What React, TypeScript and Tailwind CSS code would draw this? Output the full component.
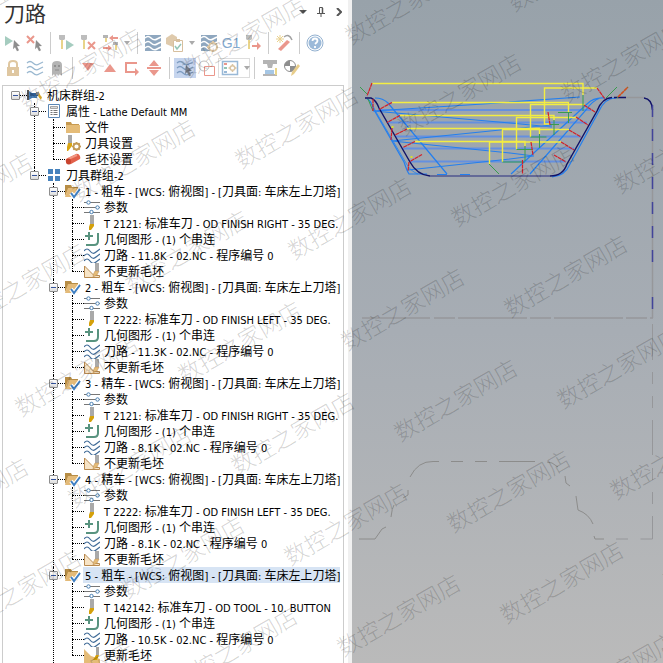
import { useState, type ReactNode } from "react";

type TreeNode = {
  icon: keyof typeof treeIcons;
  label: string;
  children?: TreeNode[];
  selected?: boolean;
  // keeps the guide line running below the node
  more?: boolean;
};

const treeIcons = {
  machine: (
    <>
      <path d="M0 3h2v10H0z" fill="#555" />
      <path d="M2 4l3 2h5v5H5l-3 2z" fill="#4a80b8" />
      <path d="M3 6h8v3H3z" fill="#315f93" />
      <path d="M11 4c-1 3 0 6 3 9l1-3c-2-1-2-4-4-6z" fill="#d4a428" />
      <path d="M9 5h3v3H9z" fill="#888" />
    </>
  ),
  props: (
    <>
      <path d="M2.500 1.500h11v13h-11z" fill="#fff" stroke="#5b87b5" />
      <path d="M4.500 4.500h7M4.500 7.500h2M7.500 7.500h4M4.500 9.500h2M7.500 9.500h4M4.500 11.500h2M7.500 11.500h4" stroke="#777" />
      <path d="M4.500 3.500h7v2h-7z" fill="#ddd" stroke="#888" strokeWidth=".7" />
    </>
  ),
  folder: (
    <>
      <path d="M1 3h5l1 2h7v9H1z" fill="#c79a50" />
      <path d="M1 6h14v8H1z" fill="#e5bc78" />
    </>
  ),
  toolSettings: (
    <>
      <path d="M3 0h4v8H3z" fill="#a8a8a8" />
      <path d="M3 8h4v3l-4 5H2v-4z" fill="#d9a514" />
      <circle cx="11.500" cy="11.500" r="3" fill="none" stroke="#c29a58" strokeWidth="1.800" />
      <path d="M11.500 7v2M11.500 14v2M7 11.500h2M14 11.500h2M8.300 8.300l1.400 1.400M13.300 13.300l1.400 1.400M14.700 8.300l-1.400 1.400M9.700 13.300l-1.400 1.400" stroke="#c29a58" strokeWidth="1.500" />
    </>
  ),
  stock: (
    <>
      <path d="M1 8l10-5c3-1 5 3 4 5L6 13c-4 1-6-2-5-5z" fill="#e2604a" />
      <path d="M3 8l9-4" stroke="#f19782" strokeWidth="2" />
      <ellipse cx="3.500" cy="10.500" rx="2.500" ry="3" fill="#c8432e" />
    </>
  ),
  group: <path d="M2 2h5v5H2zM9 2h5v5H9zM2 9h5v5H2zM9 9h5v5H9z" fill="#4682bd" />,
  operation: (
    <>
      <path d="M0 2h6l1 2h6v3H3L0 13z" fill="#b78d45" />
      <path d="M3 5h12l-3 9H0z" fill="#e3ba78" />
      <path d="M6 10l3 4 6-8" fill="none" stroke="#fff" strokeWidth="4" />
      <path d="M6 10l3 4 6-8" fill="none" stroke="#3f7fc2" strokeWidth="2" />
    </>
  ),
  params: (
    <>
      <path d="M0 3.500h16M0 8.500h16M0 13.500h16" stroke="#777" />
      <circle cx="4.500" cy="3.500" r="1.700" fill="#fff" stroke="#4980b4" />
      <circle cx="13.500" cy="8.500" r="1.700" fill="#fff" stroke="#4980b4" />
      <circle cx="7.500" cy="13" r="1.700" fill="#fff" stroke="#4980b4" />
    </>
  ),
  tool: (
    <>
      <path d="M6 0h4v9H6z" fill="#a9a9a9" />
      <path d="M6 9h4v2l-3 4H5v-3z" fill="#d4a00a" />
    </>
  ),
  geometry: (
    <>
      <path d="M14 2v8q0 4-4 4H2" fill="none" stroke="#58937f" strokeWidth="2" />
      <path d="M5 1v8M1 5h8" stroke="#58937f" strokeWidth="2" />
    </>
  ),
  path: (
    <path
      d="M0 4q3-4 6 0t6 1l4-3M0 9q3-4 6 0t6 1l4-3M0 14q3-4 6 0t6 1l4-3"
      fill="none"
      stroke="#416c98"
      strokeWidth="1.200"
    />
  ),
  stockOff: (
    <>
      <path d="M.5 3v11.500h15v-2H10z" fill="#f7e4c6" stroke="#b88a50" />
      <path d="M11 0h4v8h-4z" fill="#aaa" />
      <path d="M11 8h4l-2 4-4 2q0-3 2-6z" fill="#e5bc78" stroke="#b88a50" strokeWidth=".5" />
    </>
  ),
  stockOn: (
    <>
      <path d="M0 2l7 7 9 3v4H0z" fill="#e5bc78" />
      <path d="M12 0h3v8h-3z" fill="#a5a5a5" />
      <path d="M12 8h3l-2 5H9z" fill="#d4a00a" />
    </>
  ),
};

const operation = (title: string, tool: string, path: string, stock = "不更新毛坯", selected = false): TreeNode => ({
  icon: "operation",
  label: title,
  selected,
  more: true,
  children: [
    { icon: "params", label: "参数" },
    { icon: "tool", label: tool },
    { icon: "geometry", label: "几何图形 - (1) 个串连" },
    { icon: "path", label: path },
    { icon: stock === "更新毛坯" ? "stockOn" : "stockOff", label: stock },
  ],
});

const tree: TreeNode = {
  icon: "machine",
  label: "机床群组-2",
  children: [
    {
      icon: "props",
      label: "属性 - Lathe Default MM",
      children: [
        { icon: "folder", label: "文件" },
        { icon: "toolSettings", label: "刀具设置" },
        { icon: "stock", label: "毛坯设置" },
      ],
    },
    {
      icon: "group",
      label: "刀具群组-2",
      children: [
        operation("1 - 粗车 - [WCS: 俯视图] - [刀具面: 车床左上刀塔]", "T 2121: 标准车刀 - OD FINISH RIGHT - 35 DEG.", "刀路 - 11.8K - 02.NC - 程序编号 0"),
        operation("2 - 粗车 - [WCS: 俯视图] - [刀具面: 车床左上刀塔]", "T 2222: 标准车刀 - OD FINISH LEFT - 35 DEG.", "刀路 - 11.3K - 02.NC - 程序编号 0"),
        operation("3 - 精车 - [WCS: 俯视图] - [刀具面: 车床左上刀塔]", "T 2121: 标准车刀 - OD FINISH RIGHT - 35 DEG.", "刀路 - 8.1K - 02.NC - 程序编号 0"),
        operation("4 - 精车 - [WCS: 俯视图] - [刀具面: 车床左上刀塔]", "T 2222: 标准车刀 - OD FINISH LEFT - 35 DEG.", "刀路 - 8.1K - 02.NC - 程序编号 0"),
        operation("5 - 粗车 - [WCS: 俯视图] - [刀具面: 车床左上刀塔]", "T 142142: 标准车刀 - OD TOOL - 10. BUTTON", "刀路 - 10.5K - 02.NC - 程序编号 0", "更新毛坯", true),
      ],
    },
  ],
};

// Latin runs are one step smaller than the Chinese ones
const Label = ({ text }: { text: string }) => (
  <>
    {text.split(/([\u4e00-\u9fff]+)/).map((part, i) => (
      <span key={i} className={i % 2 ? "text-[12px]" : "text-[11px]"}>
        {part}
      </span>
    ))}
  </>
);

const TreeItem = ({ node, root, last }: { node: TreeNode; root?: boolean; last?: boolean }) => {
  const [open, setOpen] = useState(true);

  return (
    <li className="flex">
      <div className="grid w-[17px] shrink-0 items-start justify-items-start">
        {!root && (
          <span
            className={`col-start-1 row-start-1 ml-[5px] border-l border-dotted border-black ${
              last && !node.more ? "h-2" : "h-full"
            }`}
          />
        )}
        <span className="col-start-1 row-start-1 mt-2 ml-[5px] w-3 border-t border-dotted border-black" />
        {node.children && (
          <button
            onClick={() => setOpen(!open)}
            aria-label={`${open ? "Collapse" : "Expand"} ${node.label}`}
            className="col-start-1 row-start-1 mt-1 ml-px grid size-[9px] place-items-center rounded-[1px] border border-[#8e8e8e] bg-linear-to-b from-white to-[#ddd]"
          >
            <span className="h-px w-[5px] bg-[#35549c]" />
          </button>
        )}
      </div>
      <div className="min-w-0 flex-1">
        <div className="flex h-4 items-center gap-[2px] leading-4">
          <svg viewBox="0 0 16 16" className="size-4 shrink-0">
            {treeIcons[node.icon]}
          </svg>
          <span className={`h-4 pl-[2px] whitespace-nowrap ${node.selected ? "bg-[#d7e4f4]" : ""}`}>
            <Label text={node.label} />
          </span>
        </div>
        {node.children && open && (
          <ul className="pl-[2px]">
            {node.children.map((child, i) => (
              <TreeItem key={child.label} node={child} last={i === node.children!.length - 1} />
            ))}
          </ul>
        )}
      </div>
    </li>
  );
};

const Tool = ({ label, active, children }: { label: string; active?: boolean; children: ReactNode }) => (
  <button
    aria-label={label}
    className={`grid h-5 w-[22px] shrink-0 place-items-center ${active ? "bg-[#c6d5ee]" : ""}`}
  >
    <svg viewBox="0 0 18 18" className="size-[18px] opacity-55" fill="none">
      {children}
    </svg>
  </button>
);

const Drop = ({ label }: { label: string }) => (
  <button aria-label={label} className="grid h-5 w-3 shrink-0 place-items-center">
    <svg viewBox="0 0 6 4" className="h-1 w-[6px]">
      <path d="M0 0h6L3 4z" fill="#aaa" />
    </svg>
  </button>
);

const Sep = () => <span className="mx-1 h-[22px] w-px shrink-0 bg-[#ccc]" />;

const cursor = <path d="M10 6l6 6-3 .3 2 4-2 1-2-4-2 2z" fill="#333" />;
const holder = (
  <>
    <path d="M2 1h6v4L7 6H3L2 5z" fill="#888" />
    <path d="M4 6h2v9H4z" fill="#d6b22c" />
  </>
);
const waves = "M1 4q3-3 6 0t6 1l4-2M1 9q3-3 6 0t6 1l4-2M1 14q3-3 6 0t6 1l4-2";

const Toolbar = () => (
  <div className="flex flex-col gap-[5px] pl-[2px]">
    <div className="flex h-5 items-center">
      <Tool label="Select all">
        <path d="M1 2l8 5-8 5z" fill="#5ca48c" />
        {cursor}
      </Tool>
      <Tool label="Select dirty">
        <path d="M1 2l7 7M8 2L1 9" stroke="#d9432f" strokeWidth="2" />
        {cursor}
      </Tool>
      <Sep />
      <Tool label="Regenerate selected">
        {holder}
        <path d="M9 6l8 5-8 5z" fill="#5ca48c" />
      </Tool>
      <Tool label="Regenerate dirty">
        {holder}
        <path d="M9 8l7 7M16 8l-7 7" stroke="#d9432f" strokeWidth="2" />
      </Tool>
      <Tool label="Reorder">
        <path d="M2 1h5v3H2zM12 8h5v3h-5z" fill="#777" />
        <path d="M4 4h2v4H4zM14 11h2v5h-2z" fill="#d6b22c" />
        <path d="M17 4h-6M2 14h6" stroke="#d9432f" strokeWidth="2" />
        <path d="M12 1v6L8 4zM7 11v6l4-3z" fill="#d9432f" />
      </Tool>
      <Drop label="More reorder options" />
      <Sep />
      <Tool label="Backplot">
        <path d="M1 1h16v16H1z" fill="#34618c" />
        <path d={waves} stroke="#fff" strokeWidth="1.600" />
      </Tool>
      <Tool label="Verify">
        <path d="M0 4l6-4 5 3v6l-4 4-7-3z" fill="#c5a06a" />
        <path d="M7.500 6.500h9v11h-9z" fill="#fff" stroke="#b88b50" />
        <path d="M10 5h4v3h-4z" fill="#b88b50" />
        <path d="M9 12l2 3 4-5" stroke="#3c967a" strokeWidth="1.500" />
      </Tool>
      <Drop label="More verify options" />
      <Tool label="Simulator options">
        <path d="M1 1h16v9l-7 7H1z" fill="#34618c" />
        <path d={waves} stroke="#fff" strokeWidth="1.600" />
        <circle cx="13" cy="13" r="4" fill="#fff" stroke="#bd975a" strokeWidth="2" />
        <path d="M13 7v3M13 16v2M7 13h3M16 13h2" stroke="#bd975a" strokeWidth="2" />
      </Tool>
      <button aria-label="Post" className="h-5 w-[22px] shrink-0 text-center font-['Liberation_Sans',sans-serif] text-[14px] leading-5 text-[#83a9cf]">
        G1
      </button>
      <Tool label="High feed">
        {holder}
        <path d="M8 12h6" stroke="#d9432f" strokeWidth="2" />
        <path d="M13 8v8l4-4z" fill="#d9432f" />
      </Tool>
      <Sep />
      <Tool label="Feed optimization">
        <path d="M3 15L12 6l3 2-9 9z" fill="#d9432f" />
        <path d="M9 3q5-4 8 3" stroke="#555" strokeWidth="1.500" />
        <path d="M5 1v8M1 5h8M2 2l6 6M8 2L2 8" stroke="#d9ae35" />
      </Tool>
      <Sep />
      <Tool label="Help">
        <circle cx="9" cy="9" r="8" stroke="#3c72ab" />
        <circle cx="9" cy="9" r="6.500" fill="#4c83bb" />
        <path d="M6.500 7q0-2.500 2.500-2.500T11.500 7q0 1-2.500 3M9 12v2" stroke="#fff" strokeWidth="1.800" />
      </Tool>
    </div>
    <div className="flex h-5 items-center">
      <Tool label="Lock">
        <path d="M5 9V5q0-3 4-3t4 3v4" stroke="#c69b55" strokeWidth="2" />
        <path d="M3 8h12v9H3z" fill="#c69b55" />
        <path d="M9 11v3" stroke="#fff" strokeWidth="2" />
      </Tool>
      <Tool label="Toggle toolpath display">
        <path d={waves} stroke="#477eaa" strokeWidth="1.200" />
      </Tool>
      <Tool label="Ghost">
        <path d="M4 17V6q0-4 5-4t5 4v11l-2-2-2 2-1-2-2 2-1-2z" fill="#777" />
        <circle cx="7" cy="7" r="1" fill="#222" />
        <circle cx="11" cy="7" r="1" fill="#222" />
        <path d="M7 11h4" stroke="#333" />
      </Tool>
      <Sep />
      <Tool label="Move down">
        <path d="M3 4h12L9 12z" fill="#d9432f" />
      </Tool>
      <Tool label="Move up">
        <path d="M3 13h12L9 5z" fill="#d9432f" />
      </Tool>
      <Tool label="Insert after">
        <path d="M14 4H3v9h9" stroke="#d9432f" strokeWidth="2" />
        <path d="M12 9v8l4-4z" fill="#d9432f" />
      </Tool>
      <Tool label="Scroll to insert">
        <path d="M2 9h14" stroke="#d9432f" strokeWidth="2" />
        <path d="M4 7h10L9 1zM4 11h10l-5 6z" fill="#d9432f" />
      </Tool>
      <Sep />
      <Tool label="Show selected toolpaths" active>
        <path d={waves} stroke="#426e9d" strokeWidth="1.200" />
        {cursor}
      </Tool>
      <Tool label="Show selected geometry">
        <circle cx="6" cy="7" r="5" stroke="#888" />
        <path d="M6.500 7.500h10v9h-10z" stroke="#d9432f" />
      </Tool>
      <div className="flex h-5 w-8 shrink-0 items-center border border-[#ddd]">
        <Tool label="Display options">
          <path d="M1.500 2.500h15v13h-15z" stroke="#4680b8" strokeWidth="1.500" />
          <path d="M3 5h3" stroke="#d9432f" strokeWidth="2" />
          <path d="M3 9h3" stroke="#3c967a" strokeWidth="2" />
          <path d="M3 13h3" stroke="#4680b8" strokeWidth="2" />
          <circle cx="11.500" cy="9" r="2.300" stroke="#bd975a" strokeWidth="1.500" />
          <path d="M11.500 5v2M11.500 11v2M7.500 9h2M13.500 9h2" stroke="#bd975a" strokeWidth="1.500" />
        </Tool>
        <Drop label="More display options" />
      </div>
      <Sep />
      <Tool label="Machine simulation">
        <path d="M2 1h14v4h-4l-1 4H7L6 5H2zM2 15h14v2H2z" fill="#777" />
        <path d="M4 11h9v4H4z" fill="#5f9bd1" />
        <path d="M14 9h2v7h-2z" fill="#d6b22c" />
      </Tool>
      <Tool label="Edit tool">
        <circle cx="7" cy="7" r="5.500" fill="#fff" stroke="#333" />
        <path d="M7 7V1.500A5.500 5.500 0 0 0 1.500 7zM7 7v5.500A5.500 5.500 0 0 0 12.500 7z" fill="#333" />
        <path d="M8 17l1-4 6-8 2 2-6 8z" fill="#d6a52c" />
      </Tool>
    </div>
  </div>
);

const passes = [
  "M372 83.500H583V95",
  "M392 102.500H568.500V113",
  "M400 115.500H554V120",
  "M407 128.500H539.500V134",
  "M415 141.500H525V146",
  "M597 88H544.500V124H550",
  "M585 104.500H530.500V137",
  "M577 117.500H516.500V149.500",
  "M569 129.500H502.500V162",
  "M561 142H489.500V164",
];

const Drawing = () => (
  <svg viewBox="352 0 311 663" className="block w-full" fill="none" role="img" aria-label="Toolpath preview">
    {/* stock outline and centre line */}
    <g stroke="#96979a">
      <path d="M620 97.500h24M652.500 110V318" strokeWidth="1.500" />
      <path d="M362 318h68M434 318h21M458 318h69M530 318h21M554 318h69M626 318h21M650 318h3" strokeWidth="1.500" />
      <path d="M652.500 324v36M652.500 372v12M652.500 396v12M652.500 420v35M652.500 468v12M652.500 492v12M652.500 516v23h-12M628 539h-12" />
      <path
        d="M359 539h16l7-10 4-2M391 517q1-9 3-12M403 498l5-3v-5M410 477q8-16 23-15.500h6M451 461.500h12M475 461.500h12M499 461.500h36M547 462l5 1 6 4M565 476l1 7 4 3M576 496l2 14q11 4 15 14M594 536l1 3h9"
        stroke="#8c8c8b"
      />
    </g>
    {/* rapid moves */}
    <g stroke="#6590df" strokeWidth="2">
      <path d="M378 110h213M388 122.500h199M396 136.500h185M403 148.500h171M410 161.500h156" />
    </g>
    <g stroke="#237fef" strokeWidth="1.200">
      <path d="M373 111l110-7 97-7M373 111l137 12 42 4M392 141l118-12 42-4M392 141l118 12 24 3M408 170l102-11 23-3" />
      <path d="M375 98q8 0 13 5l59 71M605 98q-11-1-18 6l-76 70M600 98q-8 3-14 12l-56 64" />
      <path d="M367 99q4 1 6 9l31 54q3 9 5 12h18M552 177q13-1 18-13l29-53q6-13 17-13M437 174.500h10M460 174.500h10" />
      <path d="M368 99q3 3 8 13l30 51q4 8 12 11" strokeWidth=".8" />
    </g>
    {/* finished profile */}
    <path d="M430 176h120" stroke="#50568f" strokeWidth="1.500" />
    <path
      d="M365 98h6q5 2 8 10l31 54q7 13 20 14M550 176q13 0 17-12l30-53q5-13 15-13.500M614 97.500h12M644 98q8 1 8.500 12"
      stroke="#101268"
      strokeWidth="1.400"
    />
    <path d="M652.500 105v12M652.500 129v12M652.500 153v12M652.500 177v12M652.500 202v12M652.500 226v12M652.500 250v12M652.500 297v12" stroke="#42449a" strokeWidth="1.500" />
    <g stroke="#f3ed42" strokeWidth="1.400">
      {passes.map((d) => (
        <path key={d} d={d} />
      ))}
    </g>
    <g stroke="#389c4d">
      <path d="M583 95v16M568.500 113v10M554 120v15M539.500 134v14M525 146v15M550 124.500h9M530.500 137h16M516.500 149.500h16M502.500 162h22M489 164l10 10M360 87l8 8M368 99l5 12M558 112.500h14M606 98l11-11M617 98l11-11" />
    </g>
    <g stroke="#d21f28" strokeWidth="1.200" strokeDasharray="4 .5">
      <path d="M372 83l-5 13M392 102.500l-13 7M400 115.500l-13 7M407 129l-12 6M415 141.500l-12 6M422 154.500l-12 7M373 99v12M392 128l-1 12M409 162l-1 9" />
      <path d="M597 88l8 11M584 105l11 7M576 117l12 8M569 130l12 7M561 142l13 8M554 155l12 7M548 112l2 13M531 142l2 13M522.500 160v14" />
      <path d="M618 97l10-10" stroke="#d2501e" strokeWidth="1.600" />
    </g>
    <path d="M391.500 126h2v2h-2zM410.500 156h2v2h-2z" fill="#d8e02a" />
  </svg>
);

// the marks repeat on a slanted lattice across the whole window
const marks = Array.from({ length: 15 }, (_, i) => i - 7).flatMap((row) =>
  Array.from({ length: 9 }, (_, i) => i - 4).map((col) => ({
    x: 402 + row * 53 - col * 163,
    y: 308 + row * 91 + col * 33,
  })),
).filter(({ x, y }) => x > -70 && x < 735 && y > -50 && y < 710);

const Watermark = () => (
  <svg aria-hidden="true" className="pointer-events-none absolute inset-0 size-full">
    {marks.map(({ x, y }) => (
      <text
        key={`${x},${y}`}
        x={x}
        y={y}
        transform={`rotate(-30 ${x} ${y})`}
        textAnchor="middle"
        dominantBaseline="central"
        className="fill-black/18 text-[23px] font-light"
      >
        数控之家网店
      </text>
    ))}
  </svg>
);

export default function App() {
  return (
    <div className="relative flex h-screen overflow-hidden bg-white font-['Noto_Sans_CJK_SC',sans-serif] text-black">
      <aside className="flex w-[352px] shrink-0 flex-col border-r-4 border-[#f0f0f0] bg-white">
        <header className="flex h-[33px] items-start justify-between pr-1 pl-1">
          <h1 className="text-[21px] leading-6 text-[#333]">刀路</h1>
          <div className="flex h-6 items-center gap-2">
            <button aria-label="Panel menu" className="grid size-[10px] place-items-center">
              <svg viewBox="0 0 8 4" className="h-1 w-2">
                <path d="M0 0h8L4 4z" fill="#555" />
              </svg>
            </button>
            <button aria-label="Pin panel" className="grid size-[10px] place-items-center">
              <svg viewBox="0 0 8 10" className="h-[10px] w-2" fill="none" stroke="#555">
                <path d="M2.500 6V.5h3V6M0 6.500h8M4 7v3" />
                <path d="M5.500 1v5" strokeWidth="1.500" />
              </svg>
            </button>
            <button aria-label="Close panel" className="grid size-[10px] place-items-center">
              <svg viewBox="0 0 6 8" className="h-2 w-[6px]" fill="none" stroke="#555" strokeWidth="2">
                <path d="M1 0l4 4-4 4" />
              </svg>
            </button>
          </div>
        </header>
        <Toolbar />
        <ul className="mt-[7px] mr-1 ml-[2px] flex-1 overflow-hidden border border-b-0 border-[#ccc] pt-px pl-[7px] font-['DejaVu_Sans_Condensed','Noto_Sans_CJK_SC',sans-serif]">
          <TreeItem node={tree} root />
        </ul>
      </aside>
      <main className="min-w-0 flex-1 bg-linear-to-b from-[#98a2aa] via-[#a7adb4] to-[#bababa]">
        <Drawing />
      </main>
      <Watermark />
    </div>
  );
}
